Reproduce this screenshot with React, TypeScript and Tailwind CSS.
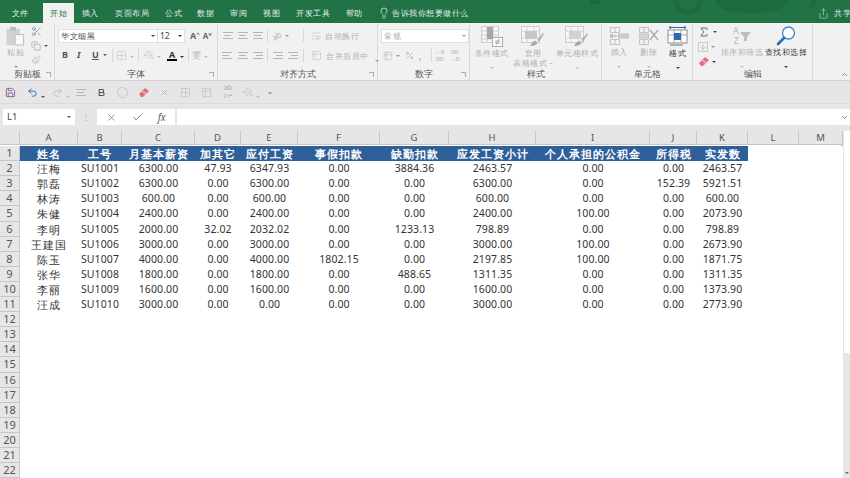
import React from 'react';
import { Scissors, Copy, Paintbrush, ChevronDown, ChevronUp, Lightbulb, Save, Undo2, Redo2, Bold, X, Check, Share, PaintBucket, Sigma, ArrowDown, Grid2x2, WrapText, Percent, Table2 } from 'lucide-react';

const cn = "font-['Noto_Sans_CJK_SC','Liberation_Sans',sans-serif]";
const tabs: [string, string][] = [
  ['文件', 'w-[43px]'], ['开始', 'w-[31px]'], ['插入', 'w-[32px]'], ['页面布局', 'w-[52px]'], ['公式', 'w-[31px]'], ['数据', 'w-[33px]'],
  ['审阅', 'w-[33px]'], ['视图', 'w-[33px]'], ['开发工具', 'w-[50px]'], ['帮助', 'w-[32px]'],
];
const cols = ['A','B','C','D','E','F','G','H','I','J','K','L','M'];
const gridCols = 'grid-cols-[20px_58px_44px_73px_46px_57px_82px_69px_87px_114px_47px_51px_51px_44px]';
const header = ['姓名','工号','月基本薪资','加其它','应付工资','事假扣款','缺勤扣款','应发工资小计','个人承担的公积金','所得税','实发数'];
const rows = [
  ['汪梅','SU1001','6300.00','47.93','6347.93','0.00','3884.36','2463.57','0.00','0.00','2463.57'],
  ['郭磊','SU1002','6300.00','0.00','6300.00','0.00','0.00','6300.00','0.00','152.39','5921.51'],
  ['林涛','SU1003','600.00','0.00','600.00','0.00','0.00','600.00','0.00','0.00','600.00'],
  ['朱健','SU1004','2400.00','0.00','2400.00','0.00','0.00','2400.00','100.00','0.00','2073.90'],
  ['李明','SU1005','2000.00','32.02','2032.02','0.00','1233.13','798.89','0.00','0.00','798.89'],
  ['王建国','SU1006','3000.00','0.00','3000.00','0.00','0.00','3000.00','100.00','0.00','2673.90'],
  ['陈玉','SU1007','4000.00','0.00','4000.00','1802.15','0.00','2197.85','100.00','0.00','1871.75'],
  ['张华','SU1008','1800.00','0.00','1800.00','0.00','488.65','1311.35','0.00','0.00','1311.35'],
  ['李丽','SU1009','1600.00','0.00','1600.00','0.00','0.00','1600.00','0.00','0.00','1373.90'],
  ['汪成','SU1010','3000.00','0.00','0.00','0.00','0.00','3000.00','0.00','0.00','2773.90'],
];

function Group({ label, w, children, launcher }: { label: string; w: string; children: React.ReactNode; launcher?: boolean }) {
  return (
    <div className={`${w} h-[56px] mt-[1px] shrink-0 flex flex-col border-r border-[#d9d9d9] relative`}>
      <div className="h-[44px] flex">{children}</div>
      <div className="h-[12px] text-center text-[9px] leading-[12px] text-[#555]">{label}</div>
      {launcher && <div className="absolute right-[3px] bottom-[3px] w-[5px] h-[5px] border-l border-b border-[#aaa] rotate-180" />}
    </div>
  );
}
function Caret({ c = 'text-[#999]' }: { c?: string }) {
  return <span className={`inline-block w-0 h-0 border-x-[2px] border-x-transparent border-t-[2px] border-t-current ${c}`} />;
}
function BigBtn({ icon, label, w, dark, sub }: { icon: React.ReactNode; label: string; w: string; dark?: boolean; sub?: string }) {
  return (
    <div className={`${w} shrink-0 flex flex-col items-center pt-[2px]`}>
      <div className="h-[21px] flex items-center justify-center">{icon}</div>
      <div className={`text-[8px] tracking-[0.5px] leading-[10px] mt-[1px] whitespace-nowrap ${dark ? 'text-[#333]' : 'text-[#b0b0b0]'}`}>{label}</div>
      {sub && <div className="text-[8px] tracking-[0.5px] leading-[10px] whitespace-nowrap text-[#b0b0b0]">{sub}</div>}
      {!sub && <div className="mt-[3px] leading-[4px]"><Caret c={dark ? 'text-[#444]' : 'text-[#c0c0c0]'} /></div>}
    </div>
  );
}
function CondIcon() {
  return (
    <svg width="22" height="21" viewBox="0 0 22 21" fill="none">
      <rect x=".5" y=".5" width="17" height="16" fill="#f5f5f5" stroke="#cfcbcf" />
      <path d="M.5 5h17M.5 9h17M.5 13h17M6 .5v16M12 .5v16" stroke="#d2ced2" />
      <rect x="6" y="1" width="6" height="12" fill="#a9a5a9" />
      <rect x="11.500" y="11.500" width="10" height="9" fill="#fbfbfb" stroke="#aaa" />
      <path d="M14 15h5M14 17h5M18 13l-3 6" stroke="#9a9a9a" strokeWidth=".8" />
    </svg>
  );
}
function StyleIcon({ fill }: { fill: string }) {
  return (
    <svg width="24" height="21" viewBox="0 0 24 21" fill="none">
      <rect x=".5" y=".5" width="18" height="16" fill="#f7f7f7" stroke="#cfcbcf" />
      <path d="M.5 5h18M.5 12h18M6 .5v16M13 .5v16" stroke="#d6d2d6" />
      <rect x="4" y="5" width="12" height="8" fill={fill} />
      <path d="M9 20c2-4 4-5 6-5l1.500 2c-1 2-4 3-7.500 3z" fill="#a8a8a8" />
      <path d="M16 14l6-7 1 1-5 8z" fill="#b5b5b5" />
    </svg>
  );
}
function InsertIcon() {
  return (
    <svg width="20" height="20" viewBox="0 0 20 20" fill="none" stroke="#c5c1c5">
      <path d="M1.500 1.500h9v5h-9zM1.500 13.500h9v5h-9zM6 13.500v5M6 1.500v5" />
      <rect x="9.500" y="8" width="10" height="4" fill="#cfcbcf" />
      <path d="M1 10h7M4 8l-2 2 2 2" stroke="#a9a9a9" />
      <path d="M1.500 8v4" />
    </svg>
  );
}
function DeleteIcon() {
  return (
    <svg width="22" height="20" viewBox="0 0 22 20" fill="none" stroke="#c5c1c5">
      <path d="M1.500 1.500h9v5h-9zM1.500 13.500h9v5h-9zM6 13.500v5M6 1.500v5" />
      <rect x="1.500" y="8" width="9" height="4" fill="#d8d5d8" />
      <path d="M12 4l8 10M20 4l-8 10" stroke="#a9a9a9" strokeWidth="1.300" />
    </svg>
  );
}
function EraserMark({ className }: { className?: string }) {
  return (
    <svg width="12" height="11" viewBox="0 0 12 11" className={className}>
      <path d="M1 7l6-6 4 3-6 6H3z" fill="#e4707a" />
      <path d="M4 4l4 3" stroke="#fff" strokeWidth=".8" />
    </svg>
  );
}
function Line3({ a = 'items-center' }: { a?: string }) {
  return (
    <div className={`flex flex-col gap-[2px] w-[11px] ${a}`}>
      <div className="h-px w-[10px] bg-[#b5b5b5]" /><div className="h-px w-[7px] bg-[#b5b5b5]" /><div className="h-px w-[10px] bg-[#b5b5b5]" />
    </div>
  );
}
const Sep = () => <div className="w-px h-[13px] bg-[#d8d8d8]" />;

export default function App() {
  return (
    <div className={`w-[850px] h-[478px] overflow-hidden flex flex-col bg-white ${cn}`}>
      {/* title tabs */}
      <div className="h-[23px] shrink-0 bg-[#217346] flex items-end text-[8px] tracking-[0.5px] text-[#e3efe8] relative">
        <svg className="absolute left-[580px] top-0" width="240" height="14" viewBox="0 0 240 14" fill="none">
          <rect x="10" y="0" width="10" height="4" fill="#1d6a3f" />
          <path d="M96 0a12 12 0 0 0 24 0" stroke="#1d6a3f" strokeWidth="5" />
          <path d="M135 0c2 9 14 13 36 13s36-4 38-13z" fill="#1d6a3f" />
          <path d="M236 0l-7 9" stroke="#1d6a3f" strokeWidth="4" />
        </svg>
        {tabs.map(([t, w]) => (
          <div key={t} className={`${w} relative text-center h-[20px] leading-[19px] shrink-0 ${t === '开始' ? 'bg-[#f1f1f1] text-[#217346]' : ''} ${t === '文件' ? 'pr-[3px]' : ''}`}>{t}</div>
        ))}
        <div className="ml-[8px] relative h-[20px] flex items-center gap-[1px] text-[#e3efe8]">
          <Lightbulb size={12} strokeWidth={1.5} />
          <span className="leading-[18px] ml-[1px]">告诉我你想要做什么</span>
        </div>
        <div className="ml-auto relative h-[20px] flex items-center gap-[3px]">
          <Share size={11} strokeWidth={1.2} className="text-[#cfe3d8]" />
          <span className="w-[16px] overflow-hidden whitespace-nowrap ml-[2px]">共享</span>
        </div>
      </div>
      {/* ribbon */}
      <div className="h-[58px] shrink-0 bg-[#f1f1f1] flex border-b border-[#d2d2d2] text-[#aaa]">
        <Group label="剪贴板" w="w-[55px]" launcher>
          <div className="w-[31px] flex flex-col items-center pt-[2px]">
            <svg width="21" height="21" viewBox="0 0 21 21"><rect x="1" y="3" width="14" height="17" fill="#d4d0d4" /><rect x="5" y="1" width="6" height="4" fill="#bdb9bd" /><path d="M10 9h9v11h-9z" fill="#fafafa" stroke="#b9b9b9" /></svg>
            <span className="text-[8px] tracking-[0.5px] leading-[10px] text-[#b0b0b0] mt-[1px]">粘贴</span>
            <div className="mt-[3px] leading-[4px]"><Caret /></div>
          </div>
          <div className="flex flex-col gap-[4px] pt-[2px] items-start">
            <Scissors size={11} strokeWidth={1.4} className="text-[#5b7fa0]" />
            <div className="flex items-center gap-[3px]"><Copy size={10} strokeWidth={1.3} className="text-[#8b8b8b]" /><Caret c="text-[#555]" /></div>
            <Paintbrush size={10} strokeWidth={1.3} className="text-[#a9a9a9]" />
          </div>
        </Group>
        <Group label="字体" w="w-[163px]" launcher>
          <div className="flex flex-col pl-[3px] pt-[5px]">
            <div className="flex items-center">
              <div className="w-[100px] h-[14px] bg-white border border-[#e0e0e0] flex items-center justify-between px-[2px] text-[8px] tracking-[0.5px] text-[#444]">华文细黑<Caret c="text-[#444]" /></div>
              <div className="w-[27px] h-[14px] bg-white border border-[#e0e0e0] border-l-0 flex items-center justify-between px-[2px] text-[8.5px] text-[#444]">12<Caret c="text-[#444]" /></div>
              <span className="ml-[5px] text-[9px] font-bold text-[#666] font-['Liberation_Sans',sans-serif]">A<sup className="text-[#3c78b4] text-[6px]">^</sup></span>
              <span className="ml-[3px] text-[8px] font-bold text-[#666] font-['Liberation_Sans',sans-serif]">A<sup className="text-[#3c78b4] text-[6px]">v</sup></span>
            </div>
            <div className="flex items-center mt-[5px] h-[14px] text-[#555] font-['Liberation_Sans',sans-serif] text-[9px] pl-[4px]">
              <span className="w-[15px] font-bold">B</span>
              <span className="w-[15px] italic font-bold">I</span>
              <span className="w-[11px] underline font-bold">U</span>
              <Caret c="text-[#555]" />
              <div className="ml-[5px]"><Sep /></div>
              <Grid2x2 size={11} strokeWidth={1} className="text-[#c0bcc0] ml-[3px]" />
              <span className="ml-[3px]"><Caret c="text-[#bbb]" /></span>
              <div className="ml-[4px]"><Sep /></div>
              <PaintBucket size={10} strokeWidth={1.2} className="text-[#b0b0b0] ml-[5px]" />
              <span className="ml-[3px]"><Caret c="text-[#bbb]" /></span>
              <div className="ml-[6px] w-[10px] flex flex-col items-center"><span className="text-[9px] leading-[9px] font-bold text-[#333]">A</span><div className="h-[2px] w-[10px] bg-black" /></div>
              <span className="ml-[3px]"><Caret c="text-[#333]" /></span>
              <div className="ml-[4px]"><Sep /></div>
              <span className={`ml-[3px] text-[9px] text-[#bbb] ${cn}`}>雯</span>
              <span className="ml-[3px]"><Caret c="text-[#bbb]" /></span>
            </div>
          </div>
        </Group>
        <Group label="对齐方式" w="w-[160px]" launcher>
          <div className="flex flex-col pl-[4px] pt-[5px]">
            <div className="flex items-center gap-[4px] h-[13px]">
              <Line3 /><Line3 /><Line3 /><Sep />
              <span className="text-[8px] text-[#b5b5b5] rotate-[-30deg] font-['Liberation_Sans',sans-serif]">ab</span><Caret />
              <div className="ml-[10px]"><Sep /></div>
              <WrapText size={10} strokeWidth={1.2} className="text-[#b5b5b5] ml-[3px]" />
              <span className="text-[8px] tracking-[0.5px] text-[#b0b0b0] whitespace-nowrap">自动换行</span>
            </div>
            <div className="flex items-center gap-[4px] h-[13px] mt-[7px]">
              <Line3 a="items-start" /><Line3 /><Line3 a="items-end" /><Sep />
              <Line3 a="items-end" /><Line3 a="items-end" />
              <div className="ml-[1px]"><Sep /></div>
              <Table2 size={11} strokeWidth={1} className="text-[#b5b5b5] ml-[3px]" />
              <span className="text-[8px] tracking-[0.5px] text-[#b0b0b0] whitespace-nowrap">合并后居中</span>
              <span className="ml-[2px]"><Caret /></span>
            </div>
          </div>
        </Group>
        <Group label="数字" w="w-[92px]" launcher>
          <div className="flex flex-col pl-[3px] pt-[5px]">
            <div className="w-[88px] h-[14px] bg-white border border-[#e0e0e0] flex items-center justify-between px-[2px] text-[8px] tracking-[0.5px] text-[#aaa]">常规<Caret /></div>
            <div className="flex items-center gap-[3px] mt-[6px] h-[13px] pl-[2px]">
              <Table2 size={10} strokeWidth={1} className="text-[#aaa]" /><Caret />
              <Percent size={9} className="text-[#aaa] ml-[2px]" />
              <span className="text-[10px] leading-[10px] text-[#aaa] ml-[2px]">,</span>
              <div className="ml-[6px]"><Sep /></div>
              <span className="text-[6px] leading-[7px] text-[#aaa] font-['Liberation_Sans',sans-serif] w-[12px]">←0<br />.00</span>
              <span className="text-[6px] leading-[7px] text-[#aaa] font-['Liberation_Sans',sans-serif] w-[12px]">.00<br />→0</span>
            </div>
          </div>
        </Group>
        <Group label="样式" w="w-[132px]">
          <BigBtn w="w-[43px]" label="条件格式" icon={<CondIcon />} />
          <BigBtn w="w-[40px]" label="套用" sub="表格格式 -" icon={<StyleIcon fill="#c9c6c9" />} />
          <BigBtn w="w-[48px]" label="单元格样式" icon={<StyleIcon fill="#d3d0d3" />} />
        </Group>
        <Group label="单元格" w="w-[91px]">
          <div className="w-[2px] shrink-0" />
          <BigBtn w="w-[30px]" label="插入" icon={<InsertIcon />} />
          <BigBtn w="w-[29px]" label="删除" icon={<DeleteIcon />} />
          <BigBtn w="w-[29px]" dark label="格式" icon={
            <svg width="21" height="21" viewBox="0 0 21 21" fill="none"><path d="M2 1.500h17M2 1.500l2-1M2 1.500l2 1M19 1.500l-2-1M19 1.500l-2 1" stroke="#2b6cb0" /><rect x="1" y="4" width="19" height="13" fill="#fff" stroke="#8d8d8d" /><path d="M7 4v13M14 4v13M1 9h19" stroke="#a9a9a9" /><rect x="7" y="7" width="7" height="7" fill="#2b6cb0" /><path d="M3 19h13" stroke="#777" /></svg>
          } />
        </Group>
        <Group label="编辑" w="w-[120px]">
          <div className="w-[27px] pl-[5px] pt-[2px] flex flex-col gap-[4px] items-start shrink-0">
            <div className="flex items-center gap-[3px] h-[11px]"><Sigma size={12} strokeWidth={1.6} className="text-[#444]" /><Caret c="text-[#444]" /></div>
            <div className="flex items-center gap-[3px] h-[11px]"><ArrowDown size={10} className="text-[#aaa] border border-[#ccc]" /><Caret /></div>
            <div className="flex items-center gap-[2px] h-[11px]"><EraserMark /><Caret c="text-[#444]" /></div>
          </div>
          <BigBtn w="w-[44px]" label="排序和筛选" icon={
            <div className="flex items-center gap-[1px]">
              <span className="text-[9px] leading-[10px] font-['Liberation_Sans',sans-serif] text-[#b5b5b5] text-center">A<br />Z</span>
              <svg width="11" height="11" viewBox="0 0 11 11"><path d="M0 1h11L7 6v4H4V6z" fill="#c0bdc0" /></svg>
            </div>
          } />
          <BigBtn w="w-[44px]" dark label="查找和选择" icon={
            <svg width="20" height="20" viewBox="0 0 20 20" fill="none"><circle cx="12.500" cy="7" r="6" fill="#fff" stroke="#3a86d0" strokeWidth="1.300" /><path d="M8 12l-6 6" stroke="#2b6cb0" strokeWidth="2.600" strokeLinecap="round" /></svg>
          } />
        </Group>
        <div className="flex-1 flex items-end justify-end pr-[1px] pb-[1px]"><ChevronUp size={9} className="text-[#666]" /></div>
      </div>
      {/* quick access */}
      <div className="h-[23px] shrink-0 bg-[#e6e6e6] flex items-center text-[#b0b0b0] border-b border-[#dadada]">
        <Save size={11} strokeWidth={1.6} className="text-[#6a3d8f] ml-[5px]" />
        <Undo2 size={11} strokeWidth={2} className="text-[#2a6bb0] ml-[11px]" />
        <span className="ml-[3px]"><Caret c="text-[#555]" /></span>
        <Redo2 size={11} strokeWidth={1.5} className="ml-[7px]" />
        <span className="ml-[3px]"><Caret c="text-[#bbb]" /></span>
        <span className="ml-[5px]"><Line3 /></span>
        <Bold size={9} strokeWidth={3} className="text-[#555] ml-[11px]" />
        <div className="ml-[11px] w-[11px] h-[11px] rounded-full border border-[#c8c8c8]" />
        <EraserMark className="ml-[10px]" />
        <X size={9} className="ml-[10px]" />
        <Grid2x2 size={11} strokeWidth={1} className="ml-[11px]" />
        <Table2 size={11} strokeWidth={1} className="ml-[10px]" />
        <span className="ml-[11px] w-[10px] text-[7px] leading-[8px] text-center font-['Liberation_Sans',sans-serif] text-[#aaa]">ab<br />c↵</span>
        <PaintBucket size={10} strokeWidth={1.2} className="ml-[10px]" />
        <span className="ml-[3px]"><Caret c="text-[#bbb]" /></span>
        <span className="ml-[8px] text-[7px] leading-[5px] text-[#777]">=</span>
      </div>
      {/* formula bar */}
      <div className="h-[27px] shrink-0 bg-[#e6e6e6] flex items-center pl-[3px] gap-[2px] pb-[1px]">
        <div className="w-[72px] h-[16px] bg-white flex items-center justify-between px-[4px] text-[9.5px] text-[#444] font-['Liberation_Sans',sans-serif]">L1<Caret c="text-[#555]" /></div>
        <span className="w-[18px] text-center text-[8px] text-[#999]">⋮</span>
        <div className="w-[78px] h-[16px] bg-white flex items-center justify-around px-[2px] text-[#666]">
          <X size={11} strokeWidth={1.5} /><Check size={11} strokeWidth={2} /><span className="text-[10px] italic font-['Liberation_Serif',serif]">fx</span>
        </div>
        <div className="flex-1 h-[16px] bg-white flex items-center justify-end pr-[1px]"><ChevronDown size={9} className="text-[#555]" /></div>
      </div>
      {/* sheet */}
      <div className="flex-1 min-h-0 flex overflow-hidden">
        <div className="w-[843px] shrink-0 border-r-2 border-[#c6c6c6]">
          <div className={`grid ${gridCols} auto-rows-[15.1px] text-[11px] leading-[15px]`}>
            <div className="h-[14px] bg-[#e6e6e6] border-r border-b border-[#c6c6c6]" />
            {cols.map(c => (
              <div key={c} className="h-[14px] bg-[#e6e6e6] border-r border-b border-[#c6c6c6] text-center text-[9.5px] leading-[14px] text-[#555] font-['Liberation_Serif',serif]">{c}</div>
            ))}
            {Array.from({ length: 22 }, (_, i) => {
              const cells = i === 0 ? header : i <= 10 ? rows[i - 1] : null;
              return (
                <React.Fragment key={i}>
                  <div className="bg-[#e6e6e6] border-r border-b border-[#c6c6c6] text-center text-[11px] leading-[14px] text-[#555] font-['Liberation_Serif',serif]">{i + 1}</div>
                  {cols.map((c, j) => {
                    const v = cells && j < 11 ? cells[j] : '';
                    const isHead = i === 0 && j < 11;
                    const isNum = i > 0 && /[0-9]/.test(v);
                    return (
                      <div key={c} className={`whitespace-nowrap text-center ${isHead ? 'bg-[#2f5f99] text-white font-bold tracking-[1px]' : 'bg-white text-[#333]'} ${isNum ? "font-['Liberation_Sans',sans-serif] text-[10.5px] tracking-[0.1px]" : i > 0 ? 'tracking-[1px]' : ''}`}>{v}</div>
                    );
                  })}
                </React.Fragment>
              );
            })}
          </div>
        </div>
        <div className="flex-1 bg-[#e6e6e6] pl-[1px] flex flex-col">
          <div className="h-[222px] bg-white" />
          <div className="mt-auto h-[6px] flex justify-center"><Caret c="text-[#666]" /></div>
        </div>
      </div>
    </div>
  );
}
